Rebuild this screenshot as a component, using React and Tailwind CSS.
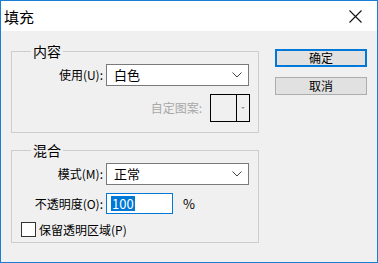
import React from "react";

const font = { fontFamily: '"Noto Sans CJK SC", "Noto Sans", sans-serif' };

function Chevron() {
  return (
    <svg width="10" height="6" viewBox="0 0 10 6" className="block">
      <path d="M0.5 0.5 L5 5 L9.5 0.5" fill="none" stroke="#444" strokeWidth="1" />
    </svg>
  );
}

function Select({ value }) {
  return (
    <div className="w-[143px] h-[22px] bg-white border border-[#7a7a7a] flex items-center justify-between pl-[7px] pr-[6px]">
      <span className="text-[13px] leading-[16px] text-black">{value}</span>
      <Chevron />
    </div>
  );
}

export default function App() {
  return (
    <div style={font} className="w-[378px] h-[263px] border border-[#1a7fd4] bg-[#f0f0f0] flex flex-col text-[12px] text-black overflow-hidden">
      <div className="h-[30px] bg-white flex items-center justify-between pl-[3px] pr-[15px] shrink-0">
        <span className="text-[15px] leading-[18px] mt-[1px]">填充</span>
        <svg width="13" height="13" viewBox="0 0 13 13" className="block mt-[1px]">
          <path d="M0.5 0.5 L12.5 12.5 M12.5 0.5 L0.5 12.5" stroke="#111" strokeWidth="1.1" fill="none" />
        </svg>
      </div>
      <div className="flex pl-[10px]">
        <div className="flex flex-col w-[248px]">
          <fieldset className="mt-[12px] h-[90px] border border-[#cdcdcd] flex flex-col">
            <legend className="ml-[19px] px-[2px] text-[14px] leading-[16px]">内容</legend>
            <div className="flex items-center mt-[5px]">
              <span className="w-[91px] text-right leading-[14px]">使用(U):</span>
              <div className="ml-[3px]"><Select value="白色" /></div>
            </div>
            <div className="flex items-center justify-end pr-[8px] mt-[8px] gap-[8px]">
              <span className="text-[#a8a8a8] leading-[14px]">自定图案:</span>
              <div className="w-[40px] h-[28px] border-[1.5px] border-black flex">
                <div className="w-[26px] border-r-[1.5px] border-black"></div>
                <div className="flex-1 flex items-center justify-center">
                  <div className="w-0 h-0 border-l-[2px] border-r-[2px] border-t-[2px] border-l-transparent border-r-transparent border-t-[#999]"></div>
                </div>
              </div>
            </div>
          </fieldset>
          <fieldset className="mt-[9px] h-[101px] border border-[#cdcdcd] flex flex-col">
            <legend className="ml-[19px] px-[2px] text-[14px] leading-[16px]">混合</legend>
            <div className="flex items-center mt-[5px]">
              <span className="w-[91px] text-right leading-[14px]">模式(M):</span>
              <div className="ml-[3px]"><Select value="正常" /></div>
            </div>
            <div className="flex items-center mt-[8px]">
              <span className="w-[91px] text-right leading-[14px]">不透明度(O):</span>
              <div className="ml-[3px] w-[67px] h-[21px] bg-white border border-[#0078d7] flex items-center pl-[4px]">
                <span className="bg-[#0078d7] text-white text-[13px] leading-[15px] px-[1px]">100</span>
              </div>
              <span className="ml-[10px] text-[13px] leading-[14px]">%</span>
            </div>
            <div className="flex items-center mt-[8px] ml-[9px]">
              <div className="w-[15px] h-[15px] bg-white border border-[#333]"></div>
              <span className="ml-[3px] leading-[14px]">保留透明区域(P)</span>
            </div>
          </fieldset>
        </div>
        <div className="flex flex-col ml-[16px] mt-[18px] w-[92px] gap-[10px]">
          <div className="h-[18px] bg-[#e1e1e1] border-2 border-[#0078d7] flex items-center justify-center leading-[14px]">确定</div>
          <div className="h-[18px] bg-[#e1e1e1] border border-[#adadad] flex items-center justify-center leading-[14px]">取消</div>
        </div>
      </div>
    </div>
  );
}
